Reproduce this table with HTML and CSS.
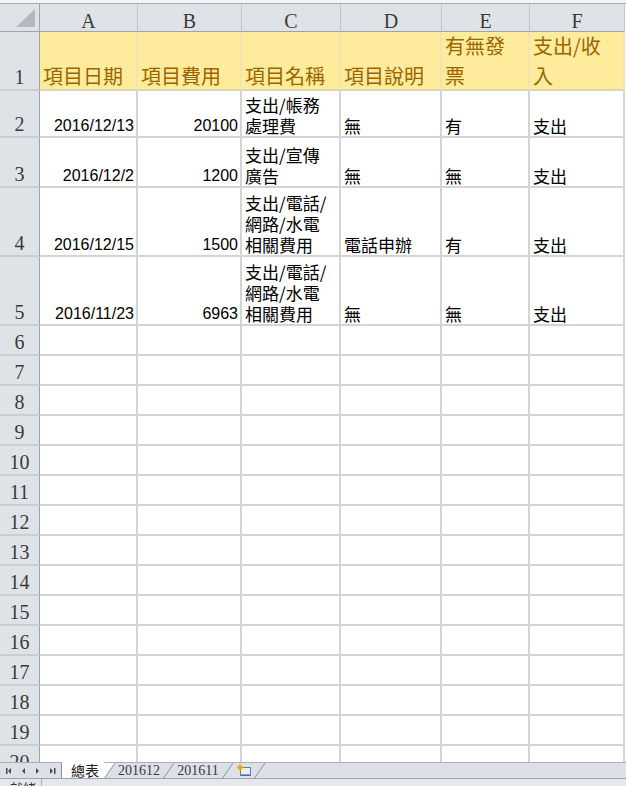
FILE: index.html
```html
<!DOCTYPE html>
<html>
<head>
<meta charset="utf-8">
<link rel="stylesheet" href="styles.css">
</head>
<body>
<div class="app">
  <div class="topstrip"></div>
  <div class="sheet">
    <div class="grid">
      <div class="corner"><span class="tri"></span></div>
      <div class="colhead">A</div>
      <div class="colhead">B</div>
      <div class="colhead">C</div>
      <div class="colhead">D</div>
      <div class="colhead">E</div>
      <div class="colhead">F</div>

      <div class="rowhead"><div>1</div></div>
      <div class="c h"><div>項目日期</div></div>
      <div class="c h"><div>項目費用</div></div>
      <div class="c h"><div>項目名稱</div></div>
      <div class="c h"><div>項目說明</div></div>
      <div class="c h"><div>有無發<br>票</div></div>
      <div class="c h"><div>支出/收<br>入</div></div>

      <div class="rowhead"><div>2</div></div>
      <div class="c num"><div>2016/12/13</div></div>
      <div class="c num"><div>20100</div></div>
      <div class="c"><div>支出/帳務<br>處理費</div></div>
      <div class="c"><div>無</div></div>
      <div class="c"><div>有</div></div>
      <div class="c"><div>支出</div></div>

      <div class="rowhead"><div>3</div></div>
      <div class="c num"><div>2016/12/2</div></div>
      <div class="c num"><div>1200</div></div>
      <div class="c"><div>支出/宣傳<br>廣告</div></div>
      <div class="c"><div>無</div></div>
      <div class="c"><div>無</div></div>
      <div class="c"><div>支出</div></div>

      <div class="rowhead"><div>4</div></div>
      <div class="c num"><div>2016/12/15</div></div>
      <div class="c num"><div>1500</div></div>
      <div class="c"><div>支出/電話/<br>網路/水電<br>相關費用</div></div>
      <div class="c"><div>電話申辦</div></div>
      <div class="c"><div>有</div></div>
      <div class="c"><div>支出</div></div>

      <div class="rowhead"><div>5</div></div>
      <div class="c num"><div>2016/11/23</div></div>
      <div class="c num"><div>6963</div></div>
      <div class="c"><div>支出/電話/<br>網路/水電<br>相關費用</div></div>
      <div class="c"><div>無</div></div>
      <div class="c"><div>無</div></div>
      <div class="c"><div>支出</div></div>

      <div class="rowhead"><div>6</div></div><div class="c"></div><div class="c"></div><div class="c"></div><div class="c"></div><div class="c"></div><div class="c"></div>
      <div class="rowhead"><div>7</div></div><div class="c"></div><div class="c"></div><div class="c"></div><div class="c"></div><div class="c"></div><div class="c"></div>
      <div class="rowhead"><div>8</div></div><div class="c"></div><div class="c"></div><div class="c"></div><div class="c"></div><div class="c"></div><div class="c"></div>
      <div class="rowhead"><div>9</div></div><div class="c"></div><div class="c"></div><div class="c"></div><div class="c"></div><div class="c"></div><div class="c"></div>
      <div class="rowhead"><div>10</div></div><div class="c"></div><div class="c"></div><div class="c"></div><div class="c"></div><div class="c"></div><div class="c"></div>
      <div class="rowhead"><div>11</div></div><div class="c"></div><div class="c"></div><div class="c"></div><div class="c"></div><div class="c"></div><div class="c"></div>
      <div class="rowhead"><div>12</div></div><div class="c"></div><div class="c"></div><div class="c"></div><div class="c"></div><div class="c"></div><div class="c"></div>
      <div class="rowhead"><div>13</div></div><div class="c"></div><div class="c"></div><div class="c"></div><div class="c"></div><div class="c"></div><div class="c"></div>
      <div class="rowhead"><div>14</div></div><div class="c"></div><div class="c"></div><div class="c"></div><div class="c"></div><div class="c"></div><div class="c"></div>
      <div class="rowhead"><div>15</div></div><div class="c"></div><div class="c"></div><div class="c"></div><div class="c"></div><div class="c"></div><div class="c"></div>
      <div class="rowhead"><div>16</div></div><div class="c"></div><div class="c"></div><div class="c"></div><div class="c"></div><div class="c"></div><div class="c"></div>
      <div class="rowhead"><div>17</div></div><div class="c"></div><div class="c"></div><div class="c"></div><div class="c"></div><div class="c"></div><div class="c"></div>
      <div class="rowhead"><div>18</div></div><div class="c"></div><div class="c"></div><div class="c"></div><div class="c"></div><div class="c"></div><div class="c"></div>
      <div class="rowhead"><div>19</div></div><div class="c"></div><div class="c"></div><div class="c"></div><div class="c"></div><div class="c"></div><div class="c"></div>
      <div class="rowhead"><div>20</div></div><div class="c"></div><div class="c"></div><div class="c"></div><div class="c"></div><div class="c"></div><div class="c"></div>
    </div>
  </div>
  <div class="tabbar">
    <div class="nav">
      <svg width="61" height="15" viewBox="0 0 61 15">
        <rect x="6" y="5" width="1.5" height="6" fill="#4a4a4a"/>
        <polygon points="11,5 11,11 8,8" fill="#4a4a4a"/>
        <polygon points="25,5 25,11 22,8" fill="#4a4a4a"/>
        <polygon points="36,5 36,11 39,8" fill="#4a4a4a"/>
        <polygon points="50,5 50,11 53,8" fill="#4a4a4a"/>
        <rect x="54" y="5" width="1.5" height="6" fill="#4a4a4a"/>
      </svg>
    </div>
    <div class="tab active">總表</div>
    <svg class="sep" width="11" height="16" viewBox="0 0 11 16"><polygon points="0,0 11,0 0,16" fill="#ffffff"/><line x1="0" y1="16" x2="11" y2="0" stroke="#8c939c" stroke-width="1"/></svg>
    <div class="tab num">201612</div>
    <svg class="sep" width="11" height="16" viewBox="0 0 11 16"><line x1="0" y1="16" x2="11" y2="0" stroke="#8c939c" stroke-width="1"/></svg>
    <div class="tab num">201611</div>
    <svg class="sep" width="11" height="16" viewBox="0 0 11 16"><line x1="0" y1="16" x2="11" y2="0" stroke="#8c939c" stroke-width="1"/></svg>
    <div class="tab ins">
      <svg width="16" height="13" viewBox="0 0 16 13">
        <rect x="4.5" y="3.5" width="10" height="8" fill="#e8eef6" stroke="#5f7ea6" stroke-width="1"/>
        <line x1="5" y1="11" x2="14" y2="11" stroke="#3c5a80" stroke-width="1"/>
        <circle cx="4" cy="3.5" r="2.2" fill="#f4b400"/>
        <path d="M4 0 V7 M0.5 3.5 H7.5 M1.5 1 L6.5 6 M6.5 1 L1.5 6" stroke="#f0a000" stroke-width="0.8"/>
      </svg>
    </div>
    <svg class="sep" width="11" height="16" viewBox="0 0 11 16"><line x1="0" y1="16" x2="11" y2="0" stroke="#8c939c" stroke-width="1"/></svg>
  </div>
  <div class="status"><span class="ready">就緒</span></div>
</div>
</body>
</html>
```
FILE: styles.css
```css
* { box-sizing: border-box; }
html, body { margin: 0; padding: 0; }
body {
  width: 626px;
  height: 786px;
  overflow: hidden;
  background: #ffffff;
  font-family: "Liberation Sans", Arial, sans-serif;
}
.app {
  width: 626px;
  height: 786px;
  display: flex;
  flex-direction: column;
  overflow: hidden;
}
.topstrip {
  flex: none;
  height: 4px;
  background: #f3f4f6;
  border-bottom: 1px solid #a3abb5;
}
.sheet {
  flex: none;
  height: 758px;
  overflow: hidden;
  background: #ffffff;
}
.grid {
  display: grid;
  width: 625px;
  grid-template-columns: 40px 98px 104px 99px 101px 88px 95px;
  grid-template-rows: 28px 59px 47px 50px 69px 69px repeat(15, 30px);
}
.corner {
  position: relative;
  background: #dfe3e8;
  border-right: 1px solid #9ba3ad;
  border-bottom: 1px solid #9ba3ad;
}
.tri {
  position: absolute;
  right: 4px;
  bottom: 4px;
  width: 0;
  height: 0;
  border-left: 19px solid transparent;
  border-bottom: 18px solid #b5b9be;
}
.colhead {
  background: #dfe3e8;
  border-right: 1px solid #c1c7cf;
  border-bottom: 1px solid #9ba3ad;
  font-family: "Liberation Serif", "Times New Roman", serif;
  font-size: 20px;
  line-height: 20px;
  padding-top: 7px;
  text-align: center;
  color: #3a3a3a;
}
.rowhead {
  background: #dfe3e8;
  border-right: 1px solid #9ba3ad;
  border-bottom: 2px solid #c9ced5;
  display: flex;
  flex-direction: column;
  justify-content: flex-end;
  font-family: "Liberation Serif", "Times New Roman", serif;
  font-size: 20px;
  line-height: 24px;
  text-align: center;
  color: #3a3a3a;
}
.c {
  border-right: 2px solid #d4d4d4;
  border-bottom: 2px solid #d4d4d4;
  display: flex;
  flex-direction: column;
  justify-content: flex-end;
  padding: 0 2px 0 3px;
  font-family: "Noto Sans CJK TC", "Noto Sans CJK SC", sans-serif;
  font-size: 17px;
  line-height: 21px;
  white-space: nowrap;
  overflow: hidden;
  color: #000000;
}
.c.num {
  font-family: "Liberation Sans", Arial, sans-serif;
  font-size: 16px;
  text-align: right;
}
.c.h {
  background: #ffeb9c;
  color: #9c6500;
  font-size: 20px;
  line-height: 30px;
  border-right-color: #f3e3b0;
  border-bottom-color: #d4d4d4;
}
.c.h > div {
  margin-bottom: -2px;
}
.tabbar {
  flex: none;
  height: 17px;
  display: flex;
  align-items: stretch;
  background: #dde1e7;
  border-top: 1px solid #a9b0b9;
  border-bottom: 1px solid #9ea5ae;
}
.nav {
  flex: none;
  width: 62px;
  border-right: 1px solid #8c939c;
  display: flex;
  align-items: center;
}
.tab {
  flex: none;
  display: flex;
  align-items: center;
  justify-content: center;
  font-family: "Noto Sans CJK TC", sans-serif;
  font-size: 14px;
  color: #222222;
  line-height: 15px;
}
.tab.active {
  width: 42px;
  background: #ffffff;
  padding-left: 4px;
  margin-top: -1px;
}
.tab.num {
  width: 48px;
  font-family: "Liberation Serif", "Times New Roman", serif;
  font-size: 14px;
  color: #3a3a3a;
}
.tab.ins {
  width: 21px;
}
.sep {
  flex: none;
  display: block;
}
.status {
  flex: none;
  height: 8px;
  background: #e4e7eb;
  position: relative;
  overflow: hidden;
  border-right: 0;
}
.ready {
  display: block;
  width: 42px;
  height: 20px;
  border-right: 1px solid #a9b0b9;
  padding: 1px 0 0 10px;
  font-family: "Noto Sans CJK TC", sans-serif;
  font-size: 13px;
  line-height: 15px;
  color: #333333;
}
```
